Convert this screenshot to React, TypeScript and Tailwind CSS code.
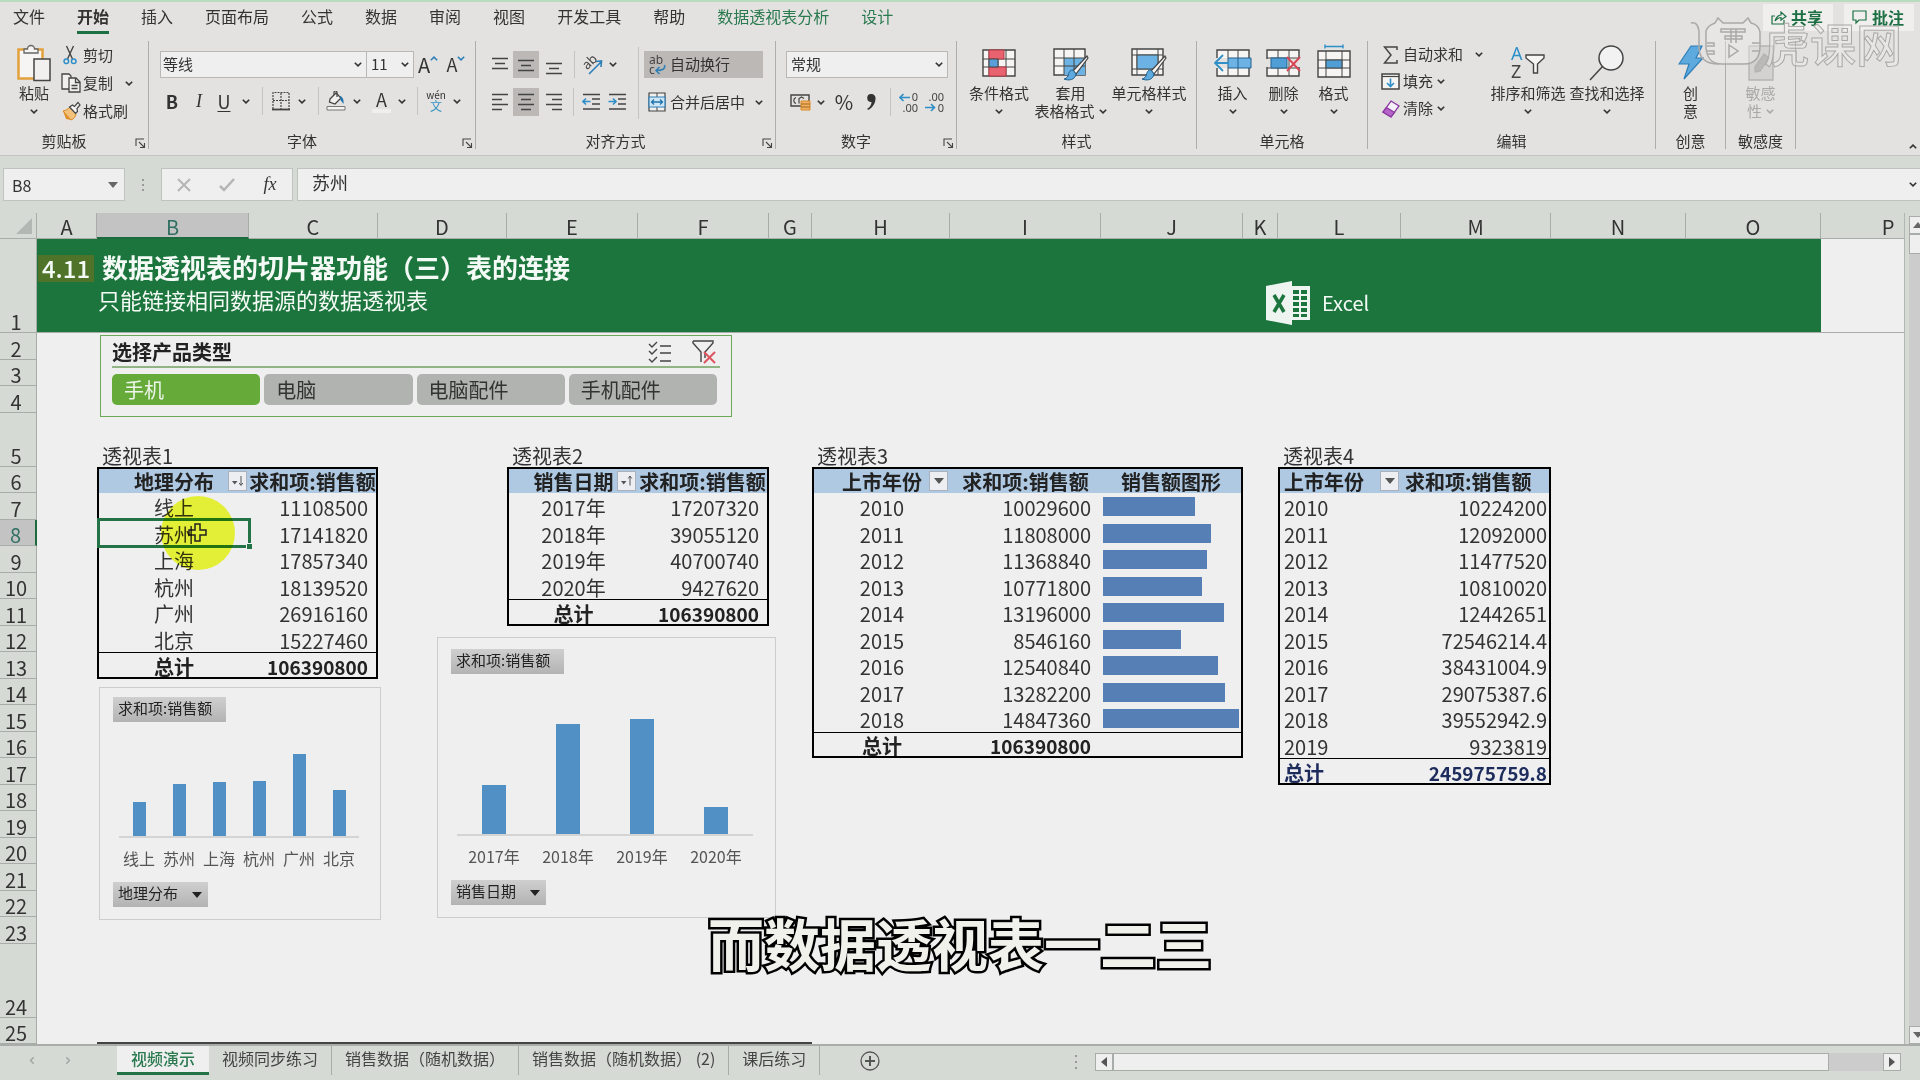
import { clsx } from "clsx";

import type { ReactNode } from "react";

const TABS = [
  "文件",
  "开始",
  "插入",
  "页面布局",
  "公式",
  "数据",
  "审阅",
  "视图",
  "开发工具",
  "帮助",
  "数据透视表分析",
  "设计",
];

const CONTEXT_TABS = ["数据透视表分析", "设计"];

const SHEETS = [
  "视频演示",
  "视频同步练习",
  "销售数据（随机数据）",
  "销售数据（随机数据） (2)",
  "课后练习",
];

const COLUMNS = [
  { id: "A", width: "w-[60px]" },
  { id: "B", width: "w-[152px]" },
  { id: "C", width: "w-[129px]" },
  { id: "D", width: "w-[129px]" },
  { id: "E", width: "w-[131px]" },
  { id: "F", width: "w-[131px]" },
  { id: "G", width: "w-[43px]" },
  { id: "H", width: "w-[138px]" },
  { id: "I", width: "w-[151px]" },
  { id: "J", width: "w-[142px]" },
  { id: "K", width: "w-[35px]" },
  { id: "L", width: "w-[123px]" },
  { id: "M", width: "w-[150px]" },
  { id: "N", width: "w-[135px]" },
  { id: "O", width: "w-[135px]" },
  { id: "P", width: "w-[135px]" },
];

const ROWS = Array.from({ length: 24 }, (_, index) => index + 2);

const rowHeight = (row: number) => {
  if (row === 5) return "h-[54px]";
  if (row === 24) return "h-[74px]";
  if (row === 2 || row === 4) return "h-[27px]";
  if (row === 3 || row === 25) return "h-[26px]";
  return row % 2 ? "h-[27px]" : "h-[26px]";
};

type Filter = "none" | "asc" | "desc";

interface Pivot {
  title: string;
  columns: string[];
  headers: string[];
  rows: [string, number][];
  total: number;
  filter: Filter;
  values: string;
  plain?: boolean;
}

const PIVOTS: Pivot[] = [
  {
    title: "透视表1",
    columns: ["B", "C"],
    headers: ["地理分布", "求和项:销售额"],
    filter: "desc",
    values: "pr-2",
    rows: [
      ["线上", 11108500],
      ["苏州", 17141820],
      ["上海", 17857340],
      ["杭州", 18139520],
      ["广州", 26916160],
      ["北京", 15227460],
    ],
    total: 106390800,
  },
  {
    title: "透视表2",
    columns: ["E", "F"],
    headers: ["销售日期", "求和项:销售额"],
    filter: "asc",
    values: "pr-2",
    rows: [
      ["2017年", 17207320],
      ["2018年", 39055120],
      ["2019年", 40700740],
      ["2020年", 9427620],
    ],
    total: 106390800,
  },
  {
    title: "透视表3",
    columns: ["H", "I", "J"],
    headers: ["上市年份", "求和项:销售额", "销售额图形"],
    filter: "none",
    values: "pr-2.5",
    rows: [
      ["2010", 10029600],
      ["2011", 11808000],
      ["2012", 11368840],
      ["2013", 10771800],
      ["2014", 13196000],
      ["2015", 8546160],
      ["2016", 12540840],
      ["2017", 13282200],
      ["2018", 14847360],
    ],
    total: 106390800,
  },
  {
    title: "透视表4",
    columns: ["L", "M"],
    headers: ["上市年份", "求和项:销售额"],
    filter: "none",
    values: "pr-0.5",
    plain: true,
    rows: [
      ["2010", 10224200],
      ["2011", 12092000],
      ["2012", 11477520],
      ["2013", 10810020],
      ["2014", 12442651],
      ["2015", 72546214.4],
      ["2016", 38431004.9],
      ["2017", 29075387.6],
      ["2018", 39552942.9],
      ["2019", 9323819],
    ],
    total: 245975759.8,
  },
];

const Chevron = ({ className }: { className?: string }) => (
  <svg
    viewBox="0 0 8 5"
    className={clsx("h-[5px] w-2 shrink-0", className)}
    fill="none"
    stroke="currentColor"
    strokeWidth="1.6"
  >
    <path d="M.8.8 4 3.9 7.2.8" />
  </svg>
);

const Arrow = ({ className }: { className?: string }) => (
  <svg viewBox="0 0 10 6" className={clsx("h-1.5 w-2.5", className)}>
    <path d="M0 0h10L5 6z" fill="currentColor" />
  </svg>
);

const Menu = ({ label, width }: { label: string; width: string }) => (
  <button
    aria-label={label}
    className={clsx("flex h-full items-center justify-center", width)}
  >
    <Chevron />
  </button>
);

const Rule = ({ width }: { width: string }) => (
  <div className={clsx("flex h-full shrink-0 justify-center", width)}>
    <div className="h-full w-px bg-[#c4c3c1]" />
  </div>
);

const IconButton = ({
  label,
  width,
  active,
  children,
}: {
  label: string;
  width: string;
  active?: boolean;
  children: ReactNode;
}) => (
  <button
    aria-label={label}
    className={clsx(
      "flex h-full shrink-0 items-center justify-center",
      width,
      active && "bg-[#bbb8b5]",
    )}
  >
    {children}
  </button>
);

const Lines = ({ d }: { d: string }) => (
  <svg
    viewBox="0 0 18 20"
    className="h-5 w-[18px]"
    fill="none"
    stroke="#444"
    strokeWidth="1.4"
  >
    <path d={d} />
  </svg>
);

const Launcher = ({ label }: { label: string }) => (
  <button aria-label={label} className="absolute right-0.5 bottom-0">
    <svg
      viewBox="0 0 11 11"
      className="size-[11px]"
      fill="none"
      stroke="#444"
      strokeWidth="1.1"
    >
      <path d="M1 8V1h8M4 4l5.500 5.500M9.500 5v4.500H5" />
    </svg>
  </button>
);

const Group = ({
  label,
  width,
  launcher,
  children,
}: {
  label: string;
  width: string;
  launcher?: boolean;
  children: ReactNode;
}) => (
  <section
    className={clsx(
      "relative flex h-[108px] shrink-0 flex-col border-r border-[#aeadab]",
      width,
    )}
  >
    <div className="flex-1">{children}</div>
    <div className={clsx("h-4 text-center leading-4", launcher && "pr-5")}>
      {label}
    </div>
    {launcher && <Launcher label={`${label}设置`} />}
  </section>
);

const BigButton = ({
  icon,
  width,
  lines,
  menu = true,
  disabled,
}: {
  icon: ReactNode;
  width: string;
  lines: [string, string?];
  menu?: boolean;
  disabled?: boolean;
}) => (
  <button
    disabled={disabled}
    className={clsx(
      "flex shrink-0 flex-col items-center whitespace-nowrap",
      width,
      disabled && "text-[#aaa9a7]",
    )}
  >
    <span className="flex h-[43px] items-center">{icon}</span>
    <span className="h-[18px] leading-[18px]">{lines[0]}</span>
    <span className="flex h-[18px] items-center gap-1 leading-[18px]">
      {lines[1]}
      {menu && <Chevron />}
    </span>
  </button>
);

const SmallButton = ({
  icon,
  children,
  menu,
  className,
}: {
  icon: ReactNode;
  children: ReactNode;
  menu?: string;
  className?: string;
}) => (
  <button className={clsx("flex items-center whitespace-nowrap", className)}>
    <span className="flex w-[22px] shrink-0 items-center">{icon}</span>
    {children}
    {menu && <Chevron className={menu} />}
  </button>
);

const PasteIcon = () => (
  <svg viewBox="0 0 34 38" className="h-[38px] w-[34px]" fill="none">
    <path d="M1.500 5.500h24v29h-24z" fill="#f6f5f3" stroke="#e3a13c" strokeWidth="2.500" />
    <path
      d="M7 9V5h3.500a3.500 3.500 0 0 1 7 0H21v4z"
      fill="#f6f5f3"
      stroke="#666"
      strokeWidth="1.300"
    />
    <path d="M17 15h16v21.500H17z" fill="#f1f0ef" stroke="#444" strokeWidth="1.500" />
  </svg>
);

const CutIcon = () => (
  <svg viewBox="0 0 14 20" className="ml-0.5 h-5 w-3.5" fill="none">
    <path d="M3.500 1 9.500 14M10.500 1l-6 13" stroke="#444" strokeWidth="1.400" />
    <circle cx="3.300" cy="16.300" r="2.300" stroke="#2f8fc8" strokeWidth="1.500" />
    <circle cx="10.700" cy="16.300" r="2.300" stroke="#2f8fc8" strokeWidth="1.500" />
  </svg>
);

const CopyIcon = () => (
  <svg
    viewBox="0 0 20 20"
    className="size-5"
    fill="#f1f0ef"
    stroke="#444"
    strokeWidth="1.300"
  >
    <path d="M1 1h7l2 2v13H1z" />
    <path d="M8 5h7l4 4v10H8z" />
    <path d="M14.500 5v4.500H19M10.500 12.500h6M10.500 15.500h6" fill="none" />
  </svg>
);

const BrushIcon = () => (
  <svg viewBox="0 0 20 20" className="size-5" fill="none">
    <path d="m2 10 8 9c3-1 5-4 5-6L9 6C7 8 5 9.500 2 10z" fill="#f3c27a" stroke="#d98a24" />
    <path d="m2 10 3 8 5 1z" fill="#e08f2b" />
    <path
      d="m8.500 6 3-2 2 1.500L17 1.500 19 4l-3 3.500.5 3-2 2z"
      fill="#f1f0ef"
      stroke="#444"
      strokeWidth="1.200"
    />
  </svg>
);

const BordersIcon = () => (
  <svg viewBox="0 0 18 20" className="h-5 w-[18px]" fill="none" stroke="#444">
    <path
      d="M1 18V1.500h16V18M9 2v16M1 9.500h16"
      strokeWidth="1.200"
      strokeDasharray="2 1"
    />
    <path d="M0 18.500h18" strokeWidth="1.800" />
  </svg>
);

const FillIcon = () => (
  <svg viewBox="0 0 20 20" className="size-5" fill="none">
    <path d="m4 8 6-6 5 5-6 6-5.500-2z" fill="#f1f0ef" stroke="#444" strokeWidth="1.300" />
    <path d="M8 4V1.500a1.500 1.500 0 0 1 3 0V6" stroke="#444" strokeWidth="1.200" />
    <path d="M14 5c3 1 4 4 3.500 8-1-1-2-3-3-4z" fill="#2174ab" />
    <path d="M1 15.500h18v3.500H1z" fill="#f3f3f1" stroke="#777" />
  </svg>
);

const PhoneticIcon = () => (
  <span className="flex flex-col items-center leading-none">
    <span className="text-[10px] leading-[10px]">wén</span>
    <span className="text-[12px] leading-[12px] text-[#3792c4]">文</span>
  </span>
);

const OrientationIcon = () => (
  <svg viewBox="0 0 21 22" className="h-[22px] w-[21px]" fill="none">
    <text
      x="1"
      y="14"
      fontSize="13"
      fill="#444"
      transform="rotate(-45 6 10)"
      fontFamily="Noto Sans, sans-serif"
    >
      ab
    </text>
    <path d="M7 20 19 8M14 7.500l5.500-.5-.5 6" stroke="#2f7fb8" strokeWidth="1.600" />
  </svg>
);

const WrapIcon = () => (
  <svg viewBox="0 0 18 20" className="h-5 w-[18px]" fill="none">
    <text x="1" y="9" fontSize="12" fill="#444" fontFamily="Noto Sans, sans-serif">
      ab
    </text>
    <text x="1" y="19" fontSize="12" fill="#444" fontFamily="Noto Sans, sans-serif">
      c
    </text>
    <path d="M16.500 10c1 4-2 5.500-8 5.500M11.500 12 8 15.500l3.500 3.500" stroke="#2f7fb8" strokeWidth="1.500" />
  </svg>
);

const MergeIcon = () => (
  <svg viewBox="0 0 18 20" className="h-5 w-[18px]" fill="none">
    <path d="M1 1h16v18H1z" fill="#f1f0ef" stroke="#444" strokeWidth="1.200" />
    <path d="M9 1v4M9 15v4" stroke="#444" />
    <path d="M1 5h16v10H1z" fill="#cfe6f5" stroke="#2f7fb8" strokeWidth="1.200" />
    <path d="M3.500 10h11M6 7.500 3.500 10 6 12.500M12 7.500l2.500 2.500-2.500 2.500" stroke="#2174ab" strokeWidth="1.300" />
  </svg>
);

const IndentIcon = ({ increase }: { increase?: boolean }) => (
  <svg viewBox="0 0 19 18" className="h-[18px] w-[19px]" fill="none">
    <path d="M1 1.500h17M10 6h8M10 11h8M1 16h17" stroke="#444" strokeWidth="1.400" />
    <path
      d={increase ? "M.5 8.500h7M5 5.500l3 3-3 3" : "M1 8.500h7.500M4 5.500l-3 3 3 3"}
      stroke="#2f8fc8"
      strokeWidth="1.600"
    />
  </svg>
);

const CurrencyIcon = () => (
  <svg viewBox="0 0 21 18" className="h-[18px] w-[21px]" fill="none">
    <path d="M1 2h18v11H1z" stroke="#444" strokeWidth="1.400" />
    <path d="M6 4.500c-3 1-3 5 0 6M9 10.500v-5l2.500-1.500L14 5.500" stroke="#444" strokeWidth="1.200" />
    <path d="M11 8h9v9h-9z" fill="#f0b266" stroke="#d98a24" />
    <path d="M11 11h9M11 14h9" stroke="#a86412" />
  </svg>
);

const DecimalIcon = ({ decrease }: { decrease?: boolean }) => (
  <svg
    viewBox="0 0 20 21"
    className="h-[21px] w-5"
    fill="none"
    fontFamily="Noto Sans, sans-serif"
    fontSize="11"
  >
    <text x="19" y="9" textAnchor="end" fill="#444">
      {decrease ? ".00" : "0"}
    </text>
    <text x="19" y="20" textAnchor="end" fill="#444">
      {decrease ? "0" : ".00"}
    </text>
    <path
      d={decrease ? "M0 15.500h9M6 12l3.500 3.500L6 19" : "M11 5.500H1M4.500 2 1 5.500 4.500 9"}
      stroke="#2f8fc8"
      strokeWidth="1.600"
    />
  </svg>
);

const ConditionalIcon = () => (
  <svg viewBox="0 0 34 28" className="h-7 w-[34px]" fill="none" stroke="#444">
    <path d="M1 1h32v26H1z" fill="#f6f5f4" strokeWidth="1.400" />
    <path d="M1 10h32M1 18h32M7 1v26M16 1v26M24 1v26" />
    <path d="M7 1h15v9H7zM7 18h17v9H7z" fill="#e8636f" stroke="#b83a47" />
    <path d="M7 10h9v8H7z" fill="#5a9fd8" />
  </svg>
);

const BrushStroke = () => (
  <>
    <path d="M34 8 20 23l3 3 12-16z" fill="#f6f5f4" stroke="#444" strokeWidth="1.200" />
    <path
      d="M20 22c-4 0-4 3-5 6-1 2-3 3-4 3 5 2 11 1 12-5z"
      fill="#5ea9dd"
      stroke="#22618f"
    />
  </>
);

const TableStyleIcon = () => (
  <svg viewBox="0 0 36 33" className="mt-1 h-[33px] w-9" fill="none" stroke="#444">
    <path d="M1 1h31v26H1z" fill="#f6f5f4" strokeWidth="1.400" />
    <path d="M11 10h21v17H11z" fill="#6cb2e4" stroke="none" />
    <path d="M1 10h31M1 18h31M11 1v26M21 1v26" />
    <BrushStroke />
  </svg>
);

const CellStyleIcon = () => (
  <svg viewBox="0 0 36 33" className="mt-1 h-[33px] w-9" fill="none" stroke="#444">
    <path d="M1 1h31v26H1z" fill="#f6f5f4" strokeWidth="1.400" />
    <path d="M1 7h31M1 21h31M6 1v26M27 1v26" />
    <path d="M6 7h21v14H6z" fill="#6cb2e4" />
    <BrushStroke />
  </svg>
);

const InsertCellsIcon = () => (
  <svg viewBox="0 0 38 28" className="h-7 w-[38px]" fill="none" stroke="#444">
    <path d="M3 1h32v26H3z" fill="#f6f5f4" strokeWidth="1.400" />
    <path d="M14 1v26M24 1v26" />
    <path d="M1 9h14v10H1z" fill="#e3e2e0" stroke="none" />
    <path d="M14 9h23v10H14zM24 9v10" fill="#6cb2e4" stroke="#22618f" />
    <path d="M15 14H2M9 6l-8 8 8 8" stroke="#2f8fc8" strokeWidth="1.800" />
  </svg>
);

const DeleteCellsIcon = () => (
  <svg viewBox="0 0 36 28" className="h-7 w-9" fill="none" stroke="#444">
    <path d="M1 1h32v26H1z" fill="#f6f5f4" strokeWidth="1.400" />
    <path d="M12 1v26M23 1v26M1 9h32M1 19h32" />
    <path d="M0 10h5v8H0zM26 10h9v8h-9z" fill="#e3e2e0" stroke="none" />
    <path d="M5 9h16v10H5z" fill="#4f9fd6" stroke="#22618f" />
    <path d="m21 8 13 14M34 8 21 22" stroke="#d94756" strokeWidth="2" />
  </svg>
);

const FormatCellsIcon = () => (
  <svg viewBox="0 0 34 34" className="mb-1 h-[34px] w-[34px]" fill="none" stroke="#444">
    <path d="M8 2.500h18M8 .5v4M26 .5v4" stroke="#2f8fc8" strokeWidth="1.400" />
    <path d="M1 7h32v26H1z" fill="#f6f5f4" strokeWidth="1.400" />
    <path d="M1 16h32M1 24h32M9 7v26M25 7v26" />
    <path d="M9 16h16v8H9z" fill="#4f9fd6" />
  </svg>
);

const SumIcon = () => (
  <svg viewBox="0 0 16 18" className="ml-0.5 h-[18px] w-4" fill="none" stroke="#444" strokeWidth="1.500">
    <path d="M14 4V1H1.500L8 9l-6.500 8H14v-3" />
  </svg>
);

const FillDownIcon = () => (
  <svg viewBox="0 0 19 17" className="h-[17px] w-[19px]" fill="none">
    <path d="M1 1h17v15H1z" fill="#f6f5f4" stroke="#444" strokeWidth="1.500" />
    <path d="M1 3.500h17" stroke="#444" strokeWidth="1.200" />
    <path d="M9.500 5.500v8M6 10l3.500 3.500L13 10" stroke="#2f8fc8" strokeWidth="1.600" />
  </svg>
);

const EraserIcon = () => (
  <svg viewBox="0 0 19 18" className="h-[18px] w-[19px]" stroke="#8c3aa0" strokeWidth="1.300">
    <path d="m10 1 8 5-8 11-8-5z" fill="#f6f0f8" />
    <path d="m5.500 7.500 8 5L10 17l-8-5z" fill="#b664c8" />
  </svg>
);

const SortIcon = () => (
  <svg viewBox="0 0 36 34" className="h-[34px] w-9" fill="none">
    <text x="1" y="14" fontSize="18" fill="#2f8fc8" fontFamily="Noto Sans, sans-serif">
      A
    </text>
    <text x="1" y="32" fontSize="18" fill="#444" fontFamily="Noto Sans, sans-serif">
      Z
    </text>
    <path
      d="M16 9h18v3l-6.500 6v9h-4v-9L16 12z"
      fill="#f6f5f4"
      stroke="#444"
      strokeWidth="1.400"
    />
  </svg>
);

const FindIcon = () => (
  <svg viewBox="0 0 36 36" className="size-9" fill="none" stroke="#444" strokeWidth="1.500">
    <circle cx="22" cy="13" r="12" fill="#f1f2f1" />
    <path d="M13.500 21.500 1 35" />
  </svg>
);

const BoltIcon = () => (
  <svg viewBox="0 0 26 36" className="h-9 w-[26px]">
    <path
      d="M13 1h11l-6 12h7L6 34l5-15H1z"
      fill="#5ea9dd"
      stroke="#2f7fb8"
      strokeWidth="1.200"
    />
  </svg>
);

const SensitivityIcon = () => (
  <svg viewBox="0 0 28 36" className="h-9 w-7" fill="#d3d2d0" stroke="#b5b4b2" strokeWidth="1.400">
    <path d="M2 1h24v34H2z" />
    <path d="m8 22 9-13 5 4-9 13-5 1z" fill="#bab9b7" />
  </svg>
);

const ShareIcon = () => (
  <svg viewBox="0 0 16 16" className="size-4" fill="none" stroke="#1d7044" strokeWidth="1.200">
    <path d="M4 7H1v8h12v-4" />
    <path d="M4 12c1-4 4-6 6-6V3l5 4.500L10 11V8.500c-2 0-4 1-6 3.500z" />
  </svg>
);

const CommentIcon = () => (
  <svg viewBox="0 0 16 16" className="size-4" fill="none" stroke="#1d7044" strokeWidth="1.200">
    <path d="M1 2h13v9H7l-3 3v-3H1z" />
  </svg>
);

const Watermark = () => (
  <div
    aria-hidden
    className="pointer-events-none absolute top-4 right-[18px] z-20 flex h-12 items-center"
  >
    <svg
      viewBox="0 0 74 50"
      className="h-[50px] w-[74px]"
      fill="none"
      stroke="#aaa9a7"
      strokeWidth="1.500"
    >
      <path
        d="M16 14c2-6 6-7 9-8l3-5 5 5h20l5-5 3 5c5 1 8 4 9 9v14c0 11-5 18-16 18H32c-11 0-15-6-16-16z"
        fill="#efeeed"
        fillOpacity=".4"
      />
      <path d="M1 6c5-1 7 2 8 8v16c0 12 8 17 20 17" />
      <path d="M31 12h24v3H31zM35 19h17v3H35zM41 12v14M46 12v14M17 26h7v3h-7M17 34h7v3h-7M62 26h8M62 34h8" />
      <path d="m39 28 9 6-9 6z" />
    </svg>
    <span className="text-[46px] leading-[48px] font-medium text-[#f0efee]/40 [-webkit-text-stroke:1px_#aaa9a7]">
      虎课网
    </span>
  </div>
);

const TabBar = () => (
  <div className="flex h-[41px] items-start justify-between">
    <nav className="flex gap-8 pl-[13px] text-[16px]">
      {TABS.map((tab) => (
        <button
          key={tab}
          className={clsx(
            "h-[34px] border-b-[3px]",
            tab === "开始"
              ? "border-[#1d7044] font-bold"
              : "border-transparent",
            CONTEXT_TABS.includes(tab) && "text-[#2b7a50]",
          )}
        >
          {tab}
        </button>
      ))}
    </nav>
    <div className="flex gap-[11px] pt-1 pr-1.5 text-[16px] font-bold text-[#1d7044]">
      <button className="flex h-[27px] items-center gap-1 bg-[#f0efee] pr-2.5 pb-0.5 pl-2">
        <ShareIcon />
        共享
      </button>
      <button className="flex h-[27px] items-center gap-1 bg-[#f0efee] pr-2.5 pb-0.5 pl-2">
        <CommentIcon />
        批注
      </button>
    </div>
  </div>
);

const ClipboardGroup = () => (
  <Group label="剪贴板" width="w-[149px]" launcher>
    <div className="flex pl-2.5">
      <BigButton icon={<PasteIcon />} width="w-12" lines={["粘贴"]} />
      <div className="flex flex-1 flex-col pl-[3px]">
        <SmallButton icon={<CutIcon />} className="h-7">
          剪切
        </SmallButton>
        <SmallButton icon={<CopyIcon />} className="h-7" menu="ml-3">
          复制
        </SmallButton>
        <SmallButton icon={<BrushIcon />} className="h-7">
          格式刷
        </SmallButton>
      </div>
    </div>
  </Group>
);

const FontGroup = () => (
  <Group label="字体" width="w-[327px]" launcher>
    <div className="flex h-[37px] items-center pt-2.5 pl-[11px]">
      <button
        aria-label="字体名称"
        className="flex h-[27px] w-[207px] items-center justify-between border border-[#b9b8b6] bg-[#efefef] pr-1 pl-0.5"
      >
        等线
        <Chevron />
      </button>
      <button
        aria-label="字号"
        className="-ml-px flex h-[27px] w-12 items-center justify-between border border-[#b9b8b6] bg-[#efefef] px-1"
      >
        11
        <Chevron />
      </button>
      <IconButton label="增大字号" width="w-7">
        <span className="text-[20px]">A</span>
        <Chevron className="-mt-3 rotate-180 text-[#2f7fb8]" />
      </IconButton>
      <IconButton label="减小字号" width="w-7">
        <span className="text-[18px]">A</span>
        <Chevron className="-mt-3 text-[#2f7fb8]" />
      </IconButton>
    </div>
    <div className="mt-[9px] flex h-7 items-center pl-[9px] text-[18px]">
      <IconButton label="加粗" width="w-7">
        <span className="font-bold">B</span>
      </IconButton>
      <IconButton label="倾斜" width="w-[26px]">
        <span className="font-['Liberation_Serif',serif] italic">I</span>
      </IconButton>
      <IconButton label="下划线" width="w-6">
        <span className="underline underline-offset-2">U</span>
      </IconButton>
      <Menu label="下划线样式" width="w-5" />
      <Rule width="w-3" />
      <IconButton label="边框" width="w-[25px]">
        <BordersIcon />
      </IconButton>
      <Menu label="边框样式" width="w-[18px]" />
      <Rule width="w-3.5" />
      <IconButton label="填充颜色" width="w-[22px]">
        <FillIcon />
      </IconButton>
      <Menu label="更多填充颜色" width="w-5" />
      <IconButton label="字体颜色" width="w-[29px]">
        <span className="border-b-4 border-[#efefee] px-1 leading-5">A</span>
      </IconButton>
      <Menu label="更多字体颜色" width="w-3" />
      <Rule width="w-[18px]" />
      <IconButton label="拼音" width="w-5">
        <PhoneticIcon />
      </IconButton>
      <Menu label="拼音选项" width="w-[22px]" />
    </div>
  </Group>
);

const AlignGroup = () => (
  <Group label="对齐方式" width="w-[300px]" launcher>
    <div className="flex pt-2.5 pl-[11px]">
      <div className="flex flex-col gap-2.5">
        <div className="flex h-[27px]">
          <IconButton label="顶端对齐" width="w-[26px]">
            <Lines d="M1 3.500h16M4 8.500h10M1 13.500h16" />
          </IconButton>
          <IconButton label="垂直居中" width="w-[26px]" active>
            <Lines d="M1 5.500h16M4 10.500h10M1 15.500h16" />
          </IconButton>
          <IconButton label="底端对齐" width="w-[29px]">
            <Lines d="M1 8.500h16M4 13.500h10M1 18.500h16" />
          </IconButton>
          <Rule width="w-3" />
          <IconButton label="方向" width="w-6">
            <OrientationIcon />
          </IconButton>
          <Menu label="方向选项" width="w-[17px]" />
        </div>
        <div className="flex h-7">
          <IconButton label="左对齐" width="w-[26px]">
            <Lines d="M1 2.500h16M1 7.500h10M1 12.500h16M1 17.500h10" />
          </IconButton>
          <IconButton label="居中" width="w-[26px]" active>
            <Lines d="M1 2.500h16M4 7.500h10M1 12.500h16M4 17.500h10" />
          </IconButton>
          <IconButton label="右对齐" width="w-[29px]">
            <Lines d="M1 2.500h16M7 7.500h10M1 12.500h16M7 17.500h10" />
          </IconButton>
          <Rule width="w-2.5" />
          <IconButton label="减少缩进量" width="w-[26px]">
            <IndentIcon />
          </IconButton>
          <IconButton label="增加缩进量" width="w-[26px]">
            <IndentIcon increase />
          </IconButton>
        </div>
      </div>
      <div className="-mt-1 ml-2 h-[72px] w-px bg-[#c4c3c1]" />
      <div className="flex flex-col gap-2.5 pl-[5px]">
        <SmallButton
          icon={<WrapIcon />}
          className="h-[27px] bg-[#bbb8b5] pr-1 pl-1"
        >
          自动换行
        </SmallButton>
        <SmallButton icon={<MergeIcon />} className="h-7 pl-1" menu="ml-2.5">
          合并后居中
        </SmallButton>
      </div>
    </div>
  </Group>
);

const NumberGroup = () => (
  <Group label="数字" width="w-[181px]" launcher>
    <div className="pt-2.5 pr-2 pl-2.5">
      <button
        aria-label="数字格式"
        className="flex h-[27px] w-full items-center justify-between border border-[#b9b8b6] bg-[#efefef] px-1"
      >
        常规
        <Chevron />
      </button>
    </div>
    <div className="mt-2.5 flex h-7 items-center pl-3">
      <IconButton label="会计数字格式" width="w-6">
        <CurrencyIcon />
      </IconButton>
      <Menu label="会计格式选项" width="w-[18px]" />
      <IconButton label="百分比样式" width="w-7">
        <span className="text-[20px]">%</span>
      </IconButton>
      <IconButton label="千位分隔样式" width="w-[26px]">
        <svg viewBox="0 0 10 18" className="h-[18px] w-2.5">
          <path
            d="M5 1a4 4 0 0 1 4.500 4.500C9.500 11 6 15 2 17l-.8-1.200C4 14 5.500 12 5.500 9A4 4 0 0 1 5 1z"
            fill="#333"
          />
        </svg>
      </IconButton>
      <Rule width="w-3" />
      <IconButton label="增加小数位数" width="w-[26px]">
        <DecimalIcon />
      </IconButton>
      <IconButton label="减少小数位数" width="w-[26px]">
        <DecimalIcon decrease />
      </IconButton>
    </div>
  </Group>
);

const Ribbon = () => (
  <div className="relative h-[155px] shrink-0 border-t-2 border-[#b9dcc0] bg-[#e3e2e0] text-[15px] text-[#333]">
    <div className="-mt-0.5">
      <TabBar />
      <div className="flex">
        <ClipboardGroup />
        <FontGroup />
        <AlignGroup />
        <NumberGroup />
        <Group label="样式" width="w-[240px]">
          <div className="flex pl-[7px]">
            <BigButton
              icon={<ConditionalIcon />}
              width="w-[70px]"
              lines={["条件格式"]}
            />
            <BigButton
              icon={<TableStyleIcon />}
              width="w-[73px]"
              lines={["套用", "表格格式"]}
            />
            <BigButton
              icon={<CellStyleIcon />}
              width="w-[84px]"
              lines={["单元格样式"]}
            />
          </div>
        </Group>
        <Group label="单元格" width="w-[171px]">
          <div className="flex pl-2.5">
            <BigButton
              icon={<InsertCellsIcon />}
              width="w-[51px]"
              lines={["插入"]}
            />
            <BigButton
              icon={<DeleteCellsIcon />}
              width="w-[51px]"
              lines={["删除"]}
            />
            <BigButton
              icon={<FormatCellsIcon />}
              width="w-[49px]"
              lines={["格式"]}
            />
          </div>
        </Group>
        <Group label="编辑" width="w-[288px]">
          <div className="flex pl-[13px]">
            <div className="flex w-[108px] flex-col">
              <SmallButton icon={<SumIcon />} className="h-[27px]" menu="ml-3">
                自动求和
              </SmallButton>
              <SmallButton
                icon={<FillDownIcon />}
                className="h-[27px]"
                menu="ml-1"
              >
                填充
              </SmallButton>
              <SmallButton
                icon={<EraserIcon />}
                className="h-[27px]"
                menu="ml-1"
              >
                清除
              </SmallButton>
            </div>
            <BigButton
              icon={<SortIcon />}
              width="w-[78px]"
              lines={["排序和筛选"]}
            />
            <BigButton
              icon={<FindIcon />}
              width="w-[80px]"
              lines={["查找和选择"]}
            />
          </div>
        </Group>
        <Group label="创意" width="w-[70px]">
          <BigButton
            icon={<BoltIcon />}
            width="w-full"
            lines={["创", "意"]}
            menu={false}
          />
        </Group>
        <Group label="敏感度" width="w-[70px]">
          <BigButton
            icon={<SensitivityIcon />}
            width="w-full"
            lines={["敏感", "性"]}
            disabled
          />
        </Group>
        <button
          aria-label="折叠功能区"
          className="mr-0.5 ml-auto flex h-[108px] items-end"
        >
          <Chevron className="h-1.5 w-2.5 rotate-180" />
        </button>
      </div>
    </div>
    <Watermark />
  </div>
);

const FormulaBar = () => (
  <div className="flex h-[58px] shrink-0 items-start border-t border-[#c2c4c0] bg-[#d5dad5] pt-3 text-[#333]">
    <div className="ml-[3px] flex h-[33px] w-[122px] items-center border border-[#bfc3bf] bg-[#efefef] pr-1.5">
      <input
        aria-label="名称框"
        defaultValue="B8"
        className="w-full min-w-0 bg-transparent pl-2 text-[16px] outline-none"
      />
      <Arrow className="shrink-0 text-[#666]" />
    </div>
    <div className="flex h-[33px] w-9 flex-col items-center justify-center gap-[3px]">
      <i className="size-0.5 bg-[#999]" />
      <i className="size-0.5 bg-[#999]" />
      <i className="size-0.5 bg-[#999]" />
    </div>
    <div className="flex h-[33px] w-[132px] items-center border border-[#bfc3bf] bg-[#efefef]">
      <IconButton label="取消" width="w-11">
        <svg viewBox="0 0 14 14" className="size-3.5" stroke="#b5b5b5" strokeWidth="2">
          <path d="m1 1 12 12M13 1 1 13" />
        </svg>
      </IconButton>
      <IconButton label="输入" width="w-[42px]">
        <svg viewBox="0 0 16 14" className="h-3.5 w-4" fill="none" stroke="#b5b5b5" strokeWidth="2.500">
          <path d="m1 8 4 4L15 1" />
        </svg>
      </IconButton>
      <IconButton label="插入函数" width="w-[44px]">
        <span className="font-['Liberation_Serif',serif] text-[18px] italic">
          fx
        </span>
      </IconButton>
    </div>
    <div className="ml-1 flex h-[33px] flex-1 items-center border-y border-l border-[#bfc3bf] bg-[#efefef] pr-[3px]">
      <input
        aria-label="编辑栏"
        defaultValue="苏州"
        className="h-[31px] min-w-0 flex-1 bg-transparent pb-1.5 pl-3.5 text-[18px] outline-none"
      />
      <Chevron />
    </div>
  </div>
);

const FilterButton = ({ kind }: { kind: Filter }) => (
  <button
    aria-label="筛选"
    className="absolute right-0.5 bottom-0.5 flex h-5 w-[19px] items-center justify-center border border-[#a9b2bd] bg-[#eceef1] text-[#555]"
  >
    {kind === "none" ? (
      <Arrow className="w-2" />
    ) : (
      <svg viewBox="0 0 14 14" className="size-3.5" fill="none">
        <path d="M1 7h5.500L3.700 10.500z" fill="currentColor" />
        <path
          d={
            kind === "desc"
              ? "M10 2v9M8.200 9 10 11.500 11.800 9"
              : "M10 11.500v-9M8.200 4.500 10 2l1.800 2.500"
          }
          stroke="currentColor"
        />
      </svg>
    )}
  </button>
);

const Selection = () => (
  <>
    <div className="absolute -top-0.5 -right-0.5 -bottom-0.5 -left-0.5 border-[3px] border-[#237346]" />
    <div className="absolute -right-1 -bottom-1 size-[7px] border border-[#efefef] bg-[#237346]" />
  </>
);

const Pointer = () => (
  <div className="absolute top-[-24px] left-[62px] z-10 flex size-[74px] items-center justify-center rounded-full bg-[#f3ff3a] mix-blend-multiply">
    <svg viewBox="0 0 20 20" className="size-5" fill="none" stroke="#222" strokeWidth="1.500">
      <path d="M7 1h5v6h6v5h-6v6H7v-6H1V7h6z" />
    </svg>
  </div>
);

interface Cell {
  content: ReactNode;
  className: string;
}

const buildCells = () => {
  const cells: Record<string, Cell> = {};

  for (const pivot of PIVOTS) {
    const { columns, headers, rows, plain, values } = pivot;
    const max = Math.max(...rows.map(([, value]) => value));
    const end = 7 + rows.length;

    cells[`${columns[0]}5`] = {
      content: pivot.title,
      className: "pb-px pl-[5px] align-bottom",
    };

    columns.forEach((column, index) => {
      const edge = clsx(
        "border-black",
        index === 0 && "border-l-2",
        index === columns.length - 1 && "border-r-2",
      );
      const align = [
        clsx("pt-0.5", plain ? "pl-1 text-left" : "text-center"),
        clsx("pt-0.5 text-right", values),
        "",
      ][index];

      cells[`${column}6`] = {
        content: (
          <>
            {headers[index]}
            {index === 0 && <FilterButton kind={pivot.filter} />}
          </>
        ),
        className: clsx(
          edge,
          "relative border-t-2 bg-[#afc9e3] font-bold text-[#222]",
          plain ? "pl-1 text-left" : "text-center",
        ),
      };

      rows.forEach(([label, value], offset) => {
        const selected = label === "苏州" && index === 0;
        cells[`${column}${7 + offset}`] = {
          content:
            index === 2 ? (
              <div className="w-[136px]">
                <div
                  className="ml-0.5 h-[19px] bg-[#567fb6]"
                  style={{ width: `${(value / max) * 100}%` }}
                />
              </div>
            ) : index === 1 ? (
              value
            ) : (
              <>
                {label}
                {selected && <Selection />}
                {selected && <Pointer />}
              </>
            ),
          className: clsx(edge, align, selected && "relative"),
        };
      });

      cells[`${column}${end}`] = {
        content: ["总计", pivot.total, ""][index],
        className: clsx(
          edge,
          align,
          "border-t border-b-2 font-bold",
          index === 1 && "text-[19px]",
          plain ? "text-[#1d2c5c]" : "text-[#222]",
        ),
      };
    });
  }

  return cells;
};

const CELLS = buildCells();

const ExcelLogo = () => (
  <svg viewBox="0 0 44 44" className="size-11">
    <path d="M26 5h18v34H26z" fill="#eef5f0" />
    <path
      d="M27 9h6v4h-6zM35 9h6v4h-6zM27 15h6v4h-6zM35 15h6v4h-6zM27 21h6v4h-6zM35 21h6v4h-6zM27 27h6v4h-6zM35 27h6v4h-6zM27 33h6v3h-6zM35 33h6v3h-6z"
      fill="#1c753d"
    />
    <path d="M0 5 26 0v44L0 39z" fill="#eef5f0" />
    <path d="m8 14 10 17M18 14 8 31" stroke="#1c753d" strokeWidth="3.500" />
  </svg>
);

const Banner = () => (
  <div className="flex h-[93px] text-[#f4faf5]">
    <div className="mt-4 w-[61px]">
      <div className="ml-px h-[27px] w-14 bg-[#4f7329] text-center text-[24px] leading-[26px] font-medium">
        4.11
      </div>
    </div>
    <div className="flex-1 pt-3">
      <h1 className="pl-1 text-[26px] leading-8 font-bold">
        数据透视表的切片器功能（三）表的连接
      </h1>
      <p className="text-[22px] leading-8">只能链接相同数据源的数据透视表</p>
    </div>
    <div className="flex w-[555px] items-center gap-3 pt-[34px] text-[20px]">
      <ExcelLogo />
      Excel
    </div>
  </div>
);

const RowHeader = ({ row }: { row: number }) => (
  <th
    scope="row"
    className={clsx(
      "border-b border-b-[#a9ada9] p-0 pr-1 text-center align-bottom font-normal",
      row === 8
        ? "border-r-2 border-r-[#1c6b40] bg-[#c3c3c4] text-[#2f6f62]"
        : "border-r border-r-[#a9ada9] bg-[#d5dad5]",
    )}
  >
    {row}
  </th>
);

const Grid = () => (
  <table className="w-max table-fixed border-separate border-spacing-0 text-[20px] leading-[21px] text-[#333]">
    <colgroup>
      <col className="w-[37px]" />
      {COLUMNS.map(({ id, width }) => (
        <col key={id} className={width} />
      ))}
    </colgroup>
    <thead>
      <tr className="h-[26px] bg-[#d5dad5]">
        <th className="relative border-r border-b border-[#a9ada9]">
          <svg viewBox="0 0 16 16" className="absolute right-1 bottom-1 size-4">
            <path d="M16 0v16H0z" fill="#b3b7b3" />
          </svg>
        </th>
        {COLUMNS.map(({ id }) => (
          <th
            key={id}
            scope="col"
            className={clsx(
              "border-r border-b p-0 pt-0.5 font-normal",
              id === "B"
                ? "border-b-2 border-r-[#a9ada9] border-b-[#1c6b40] bg-[#c3c3c4] text-[#2f6f62]"
                : "border-[#a9ada9]",
            )}
          >
            {id}
          </th>
        ))}
      </tr>
    </thead>
    <tbody>
      <tr className="h-[94px]">
        <RowHeader row={1} />
        <td colSpan={15} className="border-b border-[#a9ada9] bg-[#1c753d] p-0">
          <Banner />
        </td>
        <td className="border-b border-[#a9ada9] p-0" />
      </tr>
      {ROWS.map((row) => (
        <tr key={row} className={rowHeight(row)}>
          <RowHeader row={row} />
          {COLUMNS.map(({ id }) => {
            const cell = CELLS[`${id}${row}`];
            const ruled = row === 25 && "BCDEFG".includes(id);
            return (
              <td
                key={id}
                className={clsx(
                  "whitespace-nowrap",
                  cell?.className ?? "p-0",
                  ruled && "border-b-2 border-[#444]",
                )}
              >
                {cell?.content}
              </td>
            );
          })}
        </tr>
      ))}
    </tbody>
  </table>
);

const Slicer = () => (
  <section className="absolute top-[122px] left-[100px] h-[82px] w-[632px] border border-[#6ca855] bg-[#efefef] px-[11px] text-[20px] text-[#333]">
    <header className="flex h-8 items-center justify-between border-b-2 border-[#8fb583] pt-0.5 pr-1">
      <h2 className="font-bold text-[#222]">选择产品类型</h2>
      <div className="flex gap-5">
        <button aria-label="多选">
          <svg viewBox="0 0 24 22" className="h-[22px] w-6" fill="none" stroke="#444" strokeWidth="1.400">
            <path d="m1 3 3 3 5-5M1 10l3 3 5-5M1 18l3 3 5-5M12 5h11M12 12h11M12 20h11" />
          </svg>
        </button>
        <button aria-label="清除筛选器">
          <svg viewBox="0 0 24 24" className="size-6" fill="none" stroke="#444" strokeWidth="1.400">
            <path d="M1 1h20v2l-8 9v6M1 1v2l8 9v10" />
            <path d="m12 12 11 11M23 12 12 23" stroke="#dc5560" strokeWidth="2" />
          </svg>
        </button>
      </div>
    </header>
    <div className="mt-1.5 grid grid-cols-4 gap-1 pr-[3px]">
      {["手机", "电脑", "电脑配件", "手机配件"].map((item) => (
        <button
          key={item}
          className={clsx(
            "h-[31px] rounded-[5px] pl-3 text-left leading-[29px]",
            item === "手机" ? "bg-[#66ab3a] text-[#eef5ea]" : "bg-[#b0b3af]",
          )}
        >
          {item}
        </button>
      ))}
    </div>
  </section>
);

const FieldButton = ({
  children,
  menu,
}: {
  children: ReactNode;
  menu?: boolean;
}) => (
  <button
    className={clsx(
      "flex h-[25px] items-center gap-3.5 bg-linear-to-b from-[#cfcfcf] to-[#b3b3b3] pb-0.5 pl-[5px] text-[15px] text-[#222]",
      menu ? "pr-1.5" : "pr-3.5",
    )}
  >
    {children}
    {menu && <Arrow className="mt-0.5" />}
  </button>
);

interface ChartProps {
  className: string;
  plot: string;
  bar: string;
  field: string;
  data: [string, number][];
  scale: number;
}

const Chart = ({ className, plot, bar, field, data, scale }: ChartProps) => (
  <section
    className={clsx(
      "absolute flex flex-col items-start border border-[#cdcdcd] bg-[#efefef]",
      className,
    )}
  >
    <FieldButton>求和项:销售额</FieldButton>
    <div
      className={clsx(
        "ml-1.5 flex flex-1 items-end border-b-2 border-[#d4d4d4]",
        plot,
      )}
    >
      {data.map(([label, value]) => (
        <div key={label} className="flex flex-1 justify-center">
          <div
            className={clsx("bg-[#5190c5]", bar)}
            style={{ height: Math.round(value / scale) }}
          />
        </div>
      ))}
    </div>
    <div
      className={clsx(
        "ml-1.5 flex h-11 pt-2 text-[16px] leading-6 text-[#555]",
        plot,
      )}
    >
      {data.map(([label]) => (
        <div key={label} className="flex-1 text-center whitespace-nowrap">
          {label}
        </div>
      ))}
    </div>
    <FieldButton menu>{field}</FieldButton>
  </section>
);

const VerticalScroll = () => (
  <div className="flex w-4 shrink-0 flex-col overflow-hidden border-l border-[#b3b7b3] bg-[#d5dad5] pt-[3px] pl-1">
    <button
      aria-label="向上滚动"
      className="flex h-[18px] w-[17px] items-center justify-center border border-[#a9ada9] bg-[#efefef]"
    >
      <Arrow className="rotate-180 text-[#666]" />
    </button>
    <div className="w-[17px] flex-1 bg-[#cbcccb]">
      <div className="h-5 border border-[#a9ada9] bg-[#efefef]" />
    </div>
    <button
      aria-label="向下滚动"
      className="flex h-[18px] w-[17px] items-center justify-center border border-[#a9ada9] bg-[#efefef]"
    >
      <Arrow className="text-[#666]" />
    </button>
  </div>
);

const SheetBar = () => (
  <footer className="flex h-9 shrink-0 items-start border-t-2 border-[#a9ada9] bg-[#d5dad5] text-[16px] text-[#444]">
    <div className="flex h-7 w-[117px] items-center gap-7 pl-7 text-[#a5a9a5]">
      <button aria-label="上一个工作表">
        <Chevron className="rotate-90" />
      </button>
      <button aria-label="下一个工作表">
        <Chevron className="-rotate-90" />
      </button>
    </div>
    <nav className="flex">
      {SHEETS.map((sheet, index) => (
        <button
          key={sheet}
          className={clsx(
            "h-[29px] whitespace-nowrap",
            index === 0
              ? "border-b-[3px] border-[#237346] bg-[#efefef] px-3.5 pb-0.5 font-medium text-[#2b7a50]"
              : "border-r border-[#a9ada9] px-[13px] pb-[5px]",
          )}
        >
          {sheet}
        </button>
      ))}
    </nav>
    <button aria-label="新工作表" className="ml-10 h-[30px]">
      <svg viewBox="0 0 20 20" className="size-5" fill="none" stroke="#555" strokeWidth="1.300">
        <circle cx="10" cy="10" r="9" />
        <path d="M10 5v10M5 10h10" strokeWidth="2" />
      </svg>
    </button>
    <div className="mt-[7px] mr-[19px] ml-auto flex h-[18px] w-[43%]">
      <div className="flex w-5 flex-col justify-between py-0.5">
        <i className="size-0.5 bg-[#999]" />
        <i className="size-0.5 bg-[#999]" />
        <i className="size-0.5 bg-[#999]" />
      </div>
      <button
        aria-label="向左滚动"
        className="flex w-[18px] items-center justify-center border border-[#a9ada9] bg-[#efefef]"
      >
        <Arrow className="rotate-90 text-[#555]" />
      </button>
      <div className="flex-1 bg-[#cbcccb]">
        <div className="h-full w-[93%] border border-[#a9ada9] bg-[#efefef]" />
      </div>
      <button
        aria-label="向右滚动"
        className="flex w-[18px] items-center justify-center border border-[#a9ada9] bg-[#efefef]"
      >
        <Arrow className="-rotate-90 text-[#555]" />
      </button>
    </div>
  </footer>
);

export default function App() {
  return (
    <div className="flex h-screen flex-col overflow-hidden bg-[#efefef] font-['Noto_Sans_CJK_SC',sans-serif]">
      <Ribbon />
      <FormulaBar />
      <main className="flex min-h-0 flex-1">
        <div className="relative min-w-0 flex-1 overflow-hidden">
          <Grid />
          <Slicer />
          <Chart
            className="top-[474px] left-[99px] h-[233px] w-[282px] px-[13px] pt-[9px] pb-3"
            plot="w-60"
            bar="w-[13px]"
            field="地理分布"
            data={PIVOTS[0].rows}
            scale={328000}
          />
          <Chart
            className="top-[424px] left-[437px] h-[281px] w-[339px] px-[13px] pt-[11px] pb-3"
            plot="w-[296px]"
            bar="w-6"
            field="销售日期"
            data={PIVOTS[1].rows}
            scale={354000}
          />
        </div>
        <VerticalScroll />
      </main>
      <SheetBar />
      <p className="pointer-events-none absolute inset-x-0 bottom-[103px] text-center text-[56px] leading-[70px] font-bold text-[#f1f1ec] [paint-order:stroke_fill] [-webkit-text-stroke:5px_#000]">
        而数据透视表一二三
      </p>
    </div>
  );
}
